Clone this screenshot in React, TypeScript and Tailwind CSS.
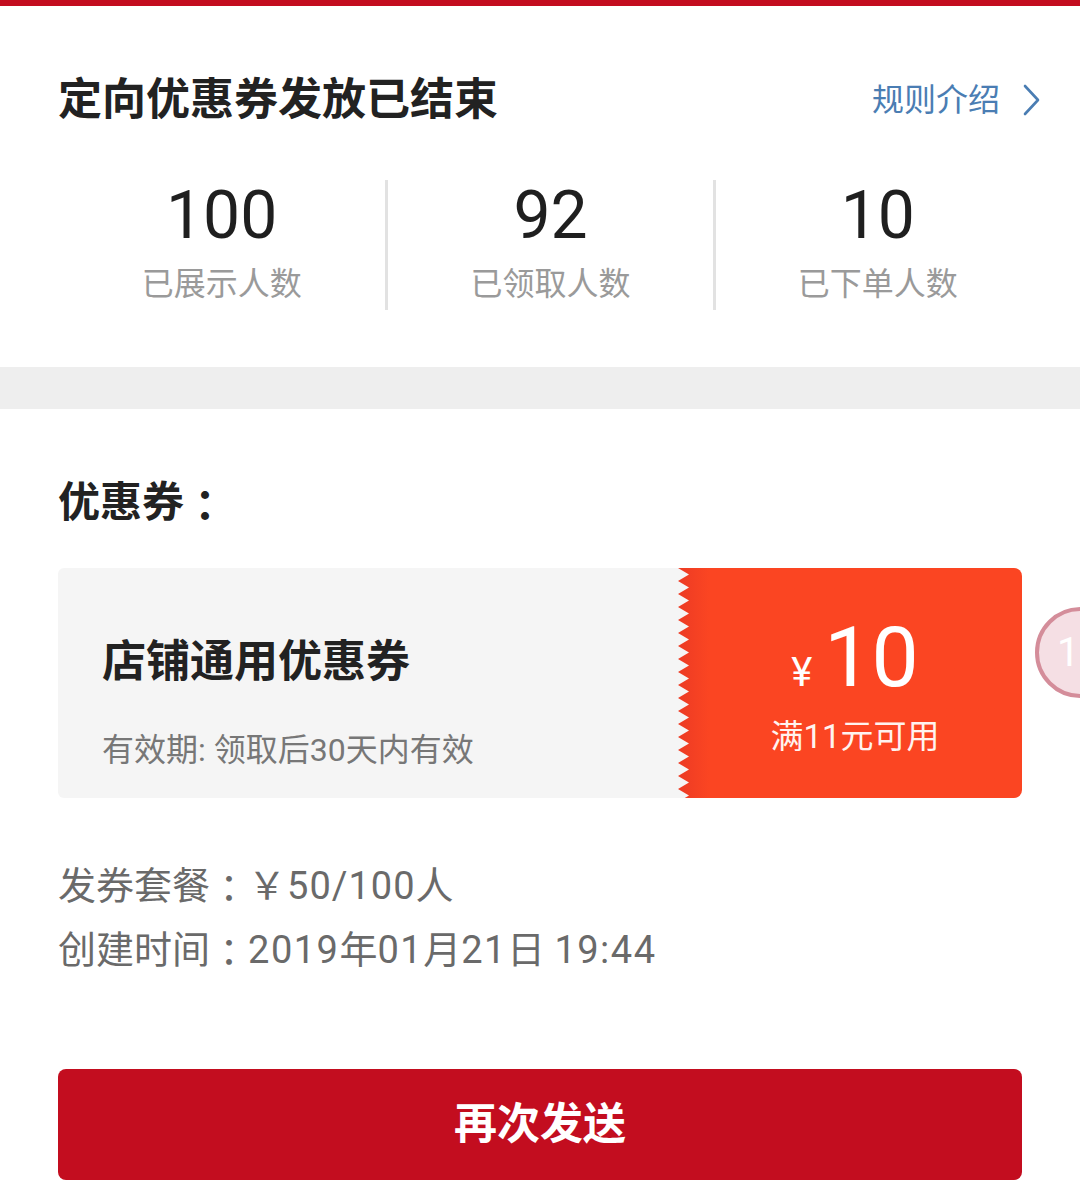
type Stat = {
  value: string
  label: string
}

const stats: Stat[] = [
  { value: "100", label: "已展示人数" },
  { value: "92", label: "已领取人数" },
  { value: "10", label: "已下单人数" },
]

// full-width colon centred in its cell, as the app renders it
function Colon() {
  return <span className="align-top font-['Noto_Sans_CJK_TC',sans-serif]">：</span>
}

function Zigzag() {
  return (
    <svg className="absolute left-0 top-0 h-full w-[12px]">
      <defs>
        <pattern id="teeth" width="12" height="13" patternUnits="userSpaceOnUse">
          <polygon points="0,0 11,6.5 0,13" fill="#f5f5f5" />
        </pattern>
      </defs>
      <rect width="12" height="100%" fill="url(#teeth)" />
    </svg>
  )
}

export default function App() {
  return (
    <div className="relative w-[1080px] h-[1186px] overflow-hidden bg-white font-[Roboto,'Noto_Sans_CJK_SC',sans-serif]">

      {/* top bar */}
      <div className="h-[6px] bg-[#c30d1f]" />

      {/* header */}
      <section className="pl-[58px] pr-[40px] pt-[70px] pb-[57px]">
        <div className="flex items-center justify-between">
          <h1 className="text-[44px] leading-[48px] font-bold text-[#222]">
            定向优惠券发放已结束
          </h1>
          <button className="flex items-center gap-[22px] text-[32px] leading-[48px] text-[#4a7db3]">
            规则介绍
            <svg width="18" height="32" viewBox="0 0 18 32" fill="none">
              <polyline points="3,2 16,16 3,30" stroke="#4a7db3" strokeWidth="2.6" strokeLinecap="round" strokeLinejoin="round" />
            </svg>
          </button>
        </div>

        <div className="mt-[56px] grid grid-cols-3">
          {stats.map((s, i) => (
            <div
              key={s.label}
              className={
                i === 0
                  ? "flex flex-col items-center pb-[6px]"
                  : "flex flex-col items-center pb-[6px] border-l-[3px] border-[#e2e2e2]"
              }
            >
              <div className="text-[66px] leading-[72px] text-[#1f1f1f]">{s.value}</div>
              <div className="mt-[12px] text-[32px] leading-[40px] text-[#9a9a9a]">{s.label}</div>
            </div>
          ))}
        </div>
      </section>

      <div className="h-[42px] bg-[#eeeeee]" />

      {/* coupon section */}
      <section className="px-[58px] pt-[69px]">
        <h2 className="h-[50px] text-[42px] leading-[50px] font-bold text-[#222]">
          优惠券<Colon />
        </h2>

        <div className="mt-[40px] flex h-[230px]">
          <div className="flex-1 rounded-l-[6px] bg-[#f5f5f5] pl-[44px] pt-[69px]">
            <div className="text-[44px] leading-[50px] font-bold text-[#222]">店铺通用优惠券</div>
            <div className="mt-[43px] text-[32px] leading-[40px] text-[#777]">
              有效期: 领取后30天内有效
            </div>
          </div>

          <div className="relative w-[344px] rounded-r-[8px] bg-linear-to-r from-[#ec3b24] via-[#fb4522] via-[9%] to-[#fb4522] flex flex-col items-center pl-[10px] pt-[48px]">
            <Zigzag />
            <div className="flex items-baseline text-white">
              <span className="mr-[12px] text-[40px] leading-[84px]">¥</span>
              <span className="text-[84px] leading-[84px]">10</span>
            </div>
            <div className="mt-[2px] text-[33px] leading-[40px] text-[#fff3ef]">满11元可用</div>
          </div>
        </div>

        <div className="mt-[56px] text-[38px] leading-[64px] text-[#6a6a6a]">
          <div className="h-[64px]">
            发券套餐<Colon /><span className="tracking-[1px]">￥50/100</span>人
          </div>
          <div className="h-[64px]">
            创建时间<Colon /><span className="tracking-[1.5px]">2019</span>年<span className="tracking-[1.5px]">01</span>月<span className="tracking-[1.5px]">21</span>日 <span className="tracking-[1.5px]">19:44</span>
          </div>
        </div>

        <button className="mt-[87px] w-full h-[111px] rounded-[8px] bg-[#c30d1f] text-[43px] font-bold text-white">
          再次发送
        </button>
      </section>

      {/* floating badge */}
      <div className="absolute left-[1035px] top-[607px] w-[91px] h-[91px] rounded-full border-[4px] border-[#d48d9a] bg-[#f5dfe4] flex items-center pl-[18px] text-[40px] text-white">
        1
      </div>
    </div>
  )
}
